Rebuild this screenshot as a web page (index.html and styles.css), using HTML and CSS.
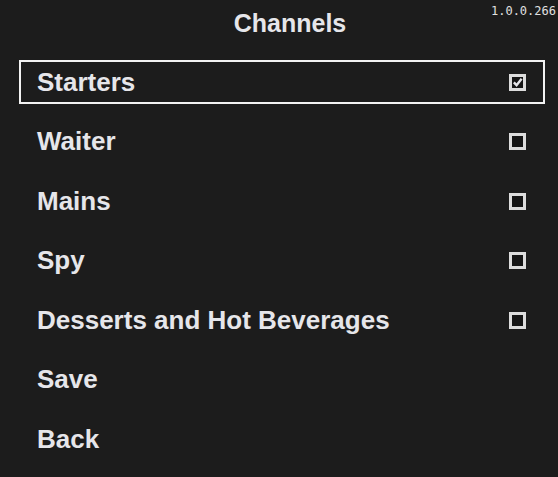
FILE: index.html
```html
<!DOCTYPE html>
<html lang="en">
<head>
  <meta charset="UTF-8" />
  <meta name="viewport" content="width=device-width, initial-scale=1.0"/>
  <title>Channels</title>
  <link rel="stylesheet" href="styles.css">
</head>

<body>
  <header class="top-bar">
    <h1>Channels</h1>
    <span class="version">1.0.0.266</span>
  </header>

  <ul class="channel-list">
    <li class="channel-item selected">
      <span>Starters</span>
      <span class="box checked">
        <svg viewBox="0 0 12 12" width="12" height="12"><path d="M2 6.5 L5 9.5 L10.5 2.5" fill="none" stroke="#e6e6ea" stroke-width="2.6"/></svg>
      </span>
    </li>
    <li class="channel-item"><span>Waiter</span><span class="box"></span></li>
    <li class="channel-item"><span>Mains</span><span class="box"></span></li>
    <li class="channel-item"><span>Spy</span><span class="box"></span></li>
    <li class="channel-item"><span>Desserts and Hot Beverages</span><span class="box"></span></li>
    <li class="channel-item"><span>Save</span></li>
    <li class="channel-item"><span>Back</span></li>
  </ul>
</body>
</html>
```

FILE: styles.css
```css
:root {
  --background: #1c1c1c;
  --text: #e6e6ea;
  --box: #dcdcdc;
}

body {
  margin: 0;
  background-color: var(--background);
  color: var(--text);
  font-family: 'Liberation Sans', Arial, sans-serif;
  padding: 0 13px 0 19px;
  height: 477px;
  box-sizing: border-box;
  overflow: hidden;
}

.top-bar {
  position: relative;
  padding-top: 8px;
  height: 60px;
  box-sizing: border-box;
}

h1 {
  margin: 0;
  font-size: 25px;
  line-height: 30px;
  font-weight: bold;
  text-align: center;
  padding-left: 16px;
}

/* build number in the corner */
.version {
  position: absolute;
  top: 4px;
  right: -11px;
  font-family: 'DejaVu Sans Mono', monospace;
  font-size: 12px;
  color: #e0e0e0;
}

.channel-list {
  list-style: none;
  margin: 0;
  padding: 0;
  display: flex;
  flex-direction: column;
  gap: 15.5px;
}

.channel-item {
  height: 44px;
  box-sizing: border-box;
  border: 2px solid transparent;
  padding: 0 17px 0 16px;
  display: flex;
  justify-content: space-between;
  align-items: center;
  font-size: 26px;
  font-weight: bold;
}

.channel-item.selected {
  border-color: #f2f2f2;
}

.box {
  width: 17px;
  height: 17px;
  box-sizing: border-box;
  border: 3px solid var(--box);
  background: #151515;
  display: flex;
  align-items: center;
  justify-content: center;
}

.box.checked svg {
  display: block;
}
```
